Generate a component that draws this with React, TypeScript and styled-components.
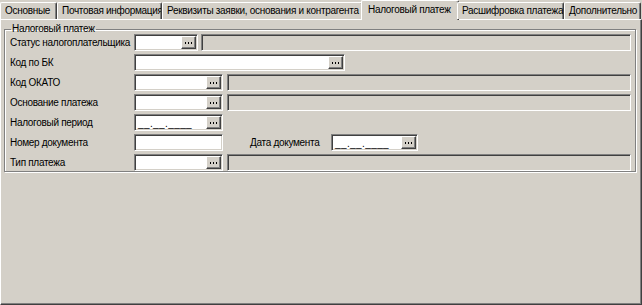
import styled, { createGlobalStyle, css } from 'styled-components';

const Global = createGlobalStyle`
    html, body {
        margin: 0;
        padding: 0;
        background: #d4d0c8;
    }
    body {
        font-family: "Liberation Sans", Arial, sans-serif;
        font-size: 10px;
        letter-spacing: -0.3px;
        color: #000;
    }
`

const Window = styled.div`
    width: 642px;
    height: 305px;
    box-sizing: border-box;
    background: #d4d0c8;
    display: flex;
    flex-direction: column;
`

const TabBar = styled.div`
    display: flex;
    flex-direction: row;
    height: 19px;
    align-items: flex-end;
    position: relative;
    z-index: 1;
`

const Tab = styled.div<{ $w: number; $active?: boolean }>`
    width: ${p => p.$w}px;
    box-sizing: border-box;
    height: 17px;
    line-height: 15px;
    padding-left: 4px;
    white-space: nowrap;
    overflow: hidden;
    border-top: 1px solid #fff;
    border-left: 1px solid #fff;
    border-right: 1px solid #404040;
    box-shadow: inset -1px 0 0 #808080;
    border-radius: 2px 2px 0 0;
    background: #d4d0c8;

    ${p => p.$active && css`
        height: 20px;
        line-height: 17px;
        margin-bottom: -1px;
        margin-left: -2px;
        margin-right: -2px;
        padding-left: 6px;
        width: ${p.$w + 4}px;
    `}
`

const Panel = styled.div`
    flex: 1;
    border-top: 1px solid #fff;
    border-left: 1px solid #fff;
    border-right: 1px solid #404040;
    border-bottom: 1px solid #404040;
    box-shadow: inset -1px -1px 0 #808080;
    padding: 4px 5px 0 3px;
`

const Group = styled.fieldset`
    margin: 0;
    padding: 0 0 6px 4px;
    border: 1px solid #808080;
    box-shadow: 1px 1px 0 #fff, inset 1px 1px 0 #fff;
    display: flex;
    flex-direction: column;
    gap: 3px;
    height: 148px;
    box-sizing: border-box;

    legend {
        padding: 0 1px;
        margin-left: 2px;
        line-height: 10px;
    }
`

const Row = styled.div`
    display: flex;
    flex-direction: row;
    align-items: center;
    height: 17px;
`

const Label = styled.div<{ $w?: number }>`
    width: ${p => p.$w ?? 125}px;
    box-sizing: border-box;
    padding-left: 1px;
    flex-shrink: 0;
    white-space: nowrap;
`

const Field = styled.div<{ $w?: number; $disabled?: boolean; $grow?: boolean }>`
    box-sizing: border-box;
    height: 17px;
    width: ${p => p.$w ? `${p.$w}px` : 'auto'};
    ${p => p.$grow && css`flex: 1;`}
    background: ${p => p.$disabled ? '#d4d0c8' : '#fff'};
    border-top: 1px solid #808080;
    border-left: 1px solid #808080;
    border-right: 1px solid #fff;
    border-bottom: 1px solid #fff;
    box-shadow: inset 1px 1px 0 #404040, inset -1px -1px 0 #d4d0c8;
    display: flex;
    align-items: center;
    justify-content: space-between;
    padding: 0 1px 0 3px;
    flex-shrink: 0;
`

const Mask = styled.span`
    font-size: 10px;
    letter-spacing: 0.4px;
    padding-top: 1px;
`

const DotsButton = styled.div`
    width: 15px;
    height: 13px;
    box-sizing: border-box;
    background: #d4d0c8;
    border-top: 1px solid #fff;
    border-left: 1px solid #fff;
    border-right: 1px solid #404040;
    border-bottom: 1px solid #404040;
    box-shadow: inset -1px -1px 0 #808080;
    display: flex;
    align-items: center;
    justify-content: center;

    svg {
        display: block;
    }
`

const Gap = styled.div<{ $w: number }>`
    width: ${p => p.$w}px;
    flex-shrink: 0;
`

const Dots = () => (
    <DotsButton>
        <svg width="7" height="2" viewBox="0 0 7 2">
            <rect x="0" y="0" width="1" height="2" fill="#000" />
            <rect x="3" y="0" width="1" height="2" fill="#000" />
            <rect x="6" y="0" width="1" height="2" fill="#000" />
        </svg>
    </DotsButton>
)

const tabs = [
    { title: 'Основные', w: 57 },
    { title: 'Почтовая информация', w: 105 },
    { title: 'Реквизиты заявки, основания и контрагента', w: 201 },
    { title: 'Налоговый платеж', w: 94, active: true },
    { title: 'Расшифровка платежа', w: 107 },
    { title: 'Дополнительно', w: 77 },
]

const App = () => {
    return (
        <Window>
            <Global />
            <TabBar>
                {tabs.map(t => (
                    <Tab key={t.title} $w={t.w} $active={t.active}>{t.title}</Tab>
                ))}
            </TabBar>
            <Panel>
                <Group>
                    <legend>Налоговый платеж</legend>
                    <Row>
                        <Label>Статус налогоплательщика</Label>
                        <Field $w={64}><span /><Dots /></Field>
                        <Gap $w={3} />
                        <Field $disabled $grow />
                        <Gap $w={4} />
                    </Row>
                    <Row>
                        <Label>Код по БК</Label>
                        <Field $w={211}><span /><Dots /></Field>
                    </Row>
                    <Row>
                        <Label>Код ОКАТО</Label>
                        <Field $w={89}><span /><Dots /></Field>
                        <Gap $w={4} />
                        <Field $disabled $grow />
                        <Gap $w={4} />
                    </Row>
                    <Row>
                        <Label>Основание платежа</Label>
                        <Field $w={89}><span /><Dots /></Field>
                        <Gap $w={4} />
                        <Field $disabled $grow />
                        <Gap $w={4} />
                    </Row>
                    <Row>
                        <Label>Налоговый период</Label>
                        <Field $w={89}><Mask>__.__.____</Mask><Dots /></Field>
                    </Row>
                    <Row>
                        <Label>Номер документа</Label>
                        <Field $w={89} />
                        <Gap $w={26} />
                        <Label $w={82}>Дата документа</Label>
                        <Field $w={87}><Mask>__.__.____</Mask><Dots /></Field>
                    </Row>
                    <Row>
                        <Label>Тип платежа</Label>
                        <Field $w={89}><span /><Dots /></Field>
                        <Gap $w={4} />
                        <Field $disabled $grow />
                        <Gap $w={4} />
                    </Row>
                </Group>
            </Panel>
        </Window>
    )
}

export default App
